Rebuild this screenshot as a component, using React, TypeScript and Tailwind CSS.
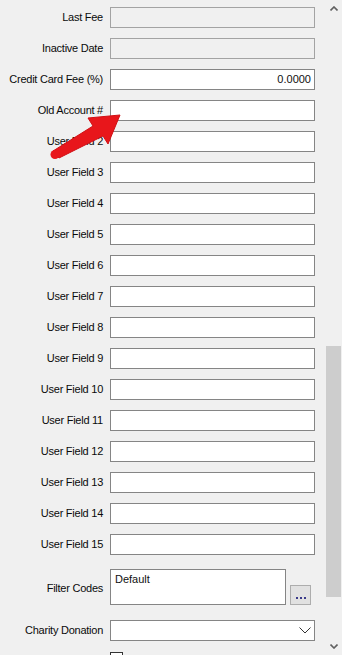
import type { ReactNode } from 'react'

const font = { fontFamily: '"Liberation Sans", Arial, sans-serif' }

function Row({ label, children }: { label: string; children: ReactNode }) {
  return (
    <div className="flex items-center h-[21px]">
      <div className="w-[104px] pr-[1px] text-right text-[11px] tracking-[-0.25px] text-[#0a0a0a] whitespace-nowrap">{label}</div>
      <div className="ml-[6px]">{children}</div>
    </div>
  )
}

function Box({ disabled, value }: { disabled?: boolean; value?: string }) {
  return (
    <div
      className={
        'w-[205px] h-[21px] border flex items-center justify-end px-[3px] text-[11px] text-[#101010] ' +
        (disabled ? 'bg-[#f0f0f0] border-[#a3a3a3]' : 'bg-white border-[#858585]')
      }
    >
      {value}
    </div>
  )
}

export default function App() {
  const userFields = Array.from({ length: 14 }, (_, i) => `User Field ${i + 2}`)
  return (
    <div className="w-[342px] h-[655px] bg-[#f0f0f0] flex overflow-hidden relative" style={font}>
      <div className="w-[325px] flex flex-col gap-[10px] pt-[7px]">
        <Row label="Last Fee"><Box disabled /></Row>
        <Row label="Inactive Date"><Box disabled /></Row>
        <Row label="Credit Card Fee (%)"><Box value="0.0000" /></Row>
        <Row label="Old Account #"><Box /></Row>
        {userFields.map((f) => (
          <Row key={f} label={f}><Box /></Row>
        ))}
        <div className="flex items-center mt-[4px]">
          <div className="w-[104px] pr-[1px] text-right text-[11px] tracking-[-0.25px] text-[#0a0a0a] pt-[2px]">Filter Codes</div>
          <div className="ml-[6px] flex items-end gap-[4px]">
            <div className="w-[176px] h-[36px] bg-white border border-[#858585] px-[4px] pt-[1px] text-[11px] text-[#101010]">Default</div>
            <div className="w-[21px] h-[20px] border border-[#adadad] bg-[#e1e1e1] flex items-end justify-center pb-[5px] gap-[2px]">
              <span className="w-[2px] h-[2px] bg-[#3a3a8a]" />
              <span className="w-[2px] h-[2px] bg-[#3a3a8a]" />
              <span className="w-[2px] h-[2px] bg-[#3a3a8a]" />
            </div>
          </div>
        </div>
        <div className="flex items-center h-[21px] mt-[5px]">
          <div className="w-[104px] pr-[1px] text-right text-[11px] tracking-[-0.25px] text-[#0a0a0a] whitespace-nowrap">Charity Donation</div>
          <div className="ml-[6px] w-[205px] h-[21px] bg-white border border-[#858585] flex items-center justify-end pr-[3px]">
            <svg width="12" height="7" viewBox="0 0 12 7"><path d="M0.5 0.5 L6 6 L11.5 0.5" fill="none" stroke="#333" strokeWidth="1" /></svg>
          </div>
        </div>
        <div className="flex mt-[1px]">
          <div className="ml-[110px] w-[13px] h-[13px] border border-[#333] bg-white" />
        </div>
      </div>
      <div className="w-[17px] h-full bg-[#f0f0f0] flex flex-col">
        <div className="h-[17px] flex items-center justify-center">
          <svg width="8" height="5" viewBox="0 0 8 5"><path d="M0.5 4.5 L4 1 L7.5 4.5" fill="none" stroke="#606060" strokeWidth="1.6" /></svg>
        </div>
        <div className="flex-1 flex flex-col px-[1px]">
          <div className="h-[329px]" />
          <div className="h-[251px] bg-[#cdcdcd]" />
          <div className="flex-1" />
        </div>
        <div className="h-[17px] flex items-center justify-center">
          <svg width="8" height="5" viewBox="0 0 8 5"><path d="M0.5 0.5 L4 4 L7.5 0.5" fill="none" stroke="#606060" strokeWidth="1.6" /></svg>
        </div>
      </div>
      <svg className="absolute left-0 top-0 pointer-events-none" width="342" height="655">
        <path
          d="M53 151 L93 126 L88 118 L120 115 L108 144 L103 136 L59 158 Z"
          fill="#e8161b"
          stroke="#d10f14"
          strokeWidth="1"
          strokeLinejoin="round"
        />
        <circle cx="55" cy="154.5" r="4.5" fill="#e8161b" />
      </svg>
    </div>
  )
}
